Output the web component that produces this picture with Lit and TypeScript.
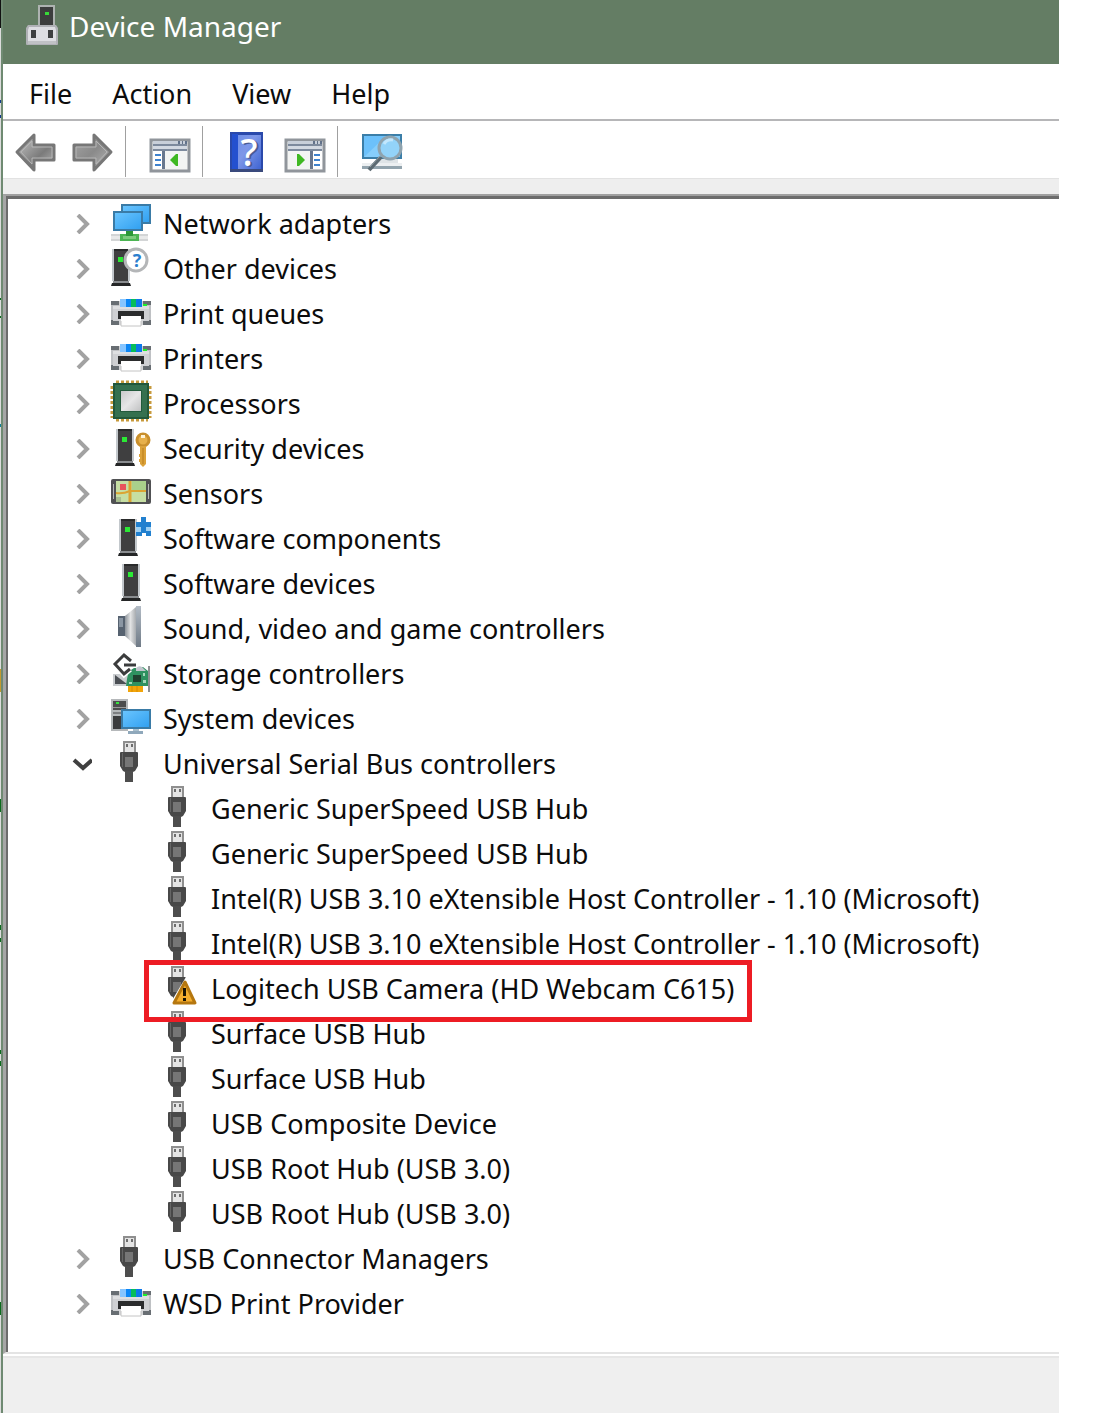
import { LitElement, html, css, svg, nothing, type TemplateResult } from "lit";
import { customElement, property, state } from "lit/decorators.js";
import { classMap } from "lit/directives/class-map.js";

type Art = TemplateResult;

const tower = (x: number) => svg`
  <rect x=${x} y="3" width="18" height="32" fill="#c3c8cc"/>
  <rect x=${x + 2} y="4" width="14" height="31" fill="#3f3f40"/>
  <rect x=${x + 2} y="3" width="14" height="2" fill="#2a2b2c"/>
  <rect x=${x + 1} y="35" width="16" height="2" fill="#8a8d90"/>
  <path d="M${x} 37h18l1 3h-20z" fill="#252627"/>
  <rect x=${x + 6} y="11" width="5" height="5" fill="#2bea35"/>`;

const usbPlug = svg`
  <rect x="12" y="0" width="13" height="12" fill="#8f8f8f"/>
  <rect x="14" y="2" width="9" height="10" fill="#e4e4e4"/>
  <rect x="15" y="3" width="2" height="3" fill="#6d6d6d"/>
  <rect x="20" y="3" width="2" height="3" fill="#6d6d6d"/>
  <path d="M9 12q0-1 1-1h16q1 0 1 1v13l-3 5-2 1h-8l-2-1-3-5z" fill="#484848"/>
  <path d="M14 16h8v10h-8z" fill="#767676"/>
  <path d="M11 12h1v14h-1z" fill="#666"/>
  <rect x="14" y="30" width="8" height="11" fill="#4d4d4d"/>`;

const printer = svg`
  <rect x="0" y="10" width="40" height="24" fill="#686e73"/>
  <path d="M0 14h40v15H0z" fill="#bfc1c4"/>
  <path d="M2 15h36v15H2z" fill="#cfd0d3"/>
  <path d="M8 10h24v8H8z" fill="#cfd0d2"/>
  <path d="M2 15h36v3H2z" fill="#dedfe1"/>
  <rect x="9" y="8" width="6" height="8" fill="#86c5ff"/>
  <rect x="15" y="8" width="5" height="8" fill="#0c86f5"/>
  <rect x="20" y="8" width="5" height="8" fill="#06bd5a"/>
  <rect x="25" y="8" width="6" height="8" fill="#0c78ea"/>
  <rect x="32" y="13" width="4" height="2" fill="#1df02a"/>
  <rect x="8" y="29" width="24" height="5" fill="#d5d6d8"/>
  <path d="M7 20h26v8h-3v-2H10v2H7z" fill="#2b2c2d"/>
  <rect x="10" y="25" width="20" height="10" fill="#fff"/>
  <path d="M10 30v5h20v-5" fill="none" stroke="#c4c4c4" stroke-width="1"/>`;

const panelWindow = (flipped: boolean) => svg`
  <rect x="1" y="8" width="38" height="31" fill="#f3f4f3" stroke="#90959b" stroke-width="3"/>
  <rect x="3" y="9" width="34" height="3" fill="#c8cfd9"/>
  <path d="M28 9h2v3h-2zM32 9h1v3h-1zM35 9h2v3h-2z" fill="#62728a"/>
  <rect x="3" y="12" width="34" height="2" fill="#7d8a9d"/>
  <rect x="3" y="14" width="34" height="3" fill="#d3d9e2"/>
  <rect x="3" y="17" width="34" height="2" fill="#7d8a9d"/>
  <g transform=${flipped ? "translate(40 0) scale(-1 1)" : "translate(0 0)"}>
    <rect x="3" y="19" width="9" height="18" fill="#fff"/>
    <rect x="12" y="19" width="3" height="18" fill="#68778e"/>
    <path d="M5 22h6v2H5zM5 27h6v2H5zM5 32h6v2H5z" fill="#3f83cf"/>
    <path d="M20 28l6-6h2v12h-2z" fill="#3fb822"/>
  </g>`;

const art: Record<string, Art> = {
  title: svg`
    <rect x="13" y="0" width="17" height="20" fill="#aeb3b1"/>
    <rect x="15" y="2" width="13" height="18" fill="#3c3d3d"/>
    <rect x="20" y="7" width="4" height="3" fill="#38d838"/>
    <path d="M3 20h28l2 3v16q0 1-1 1H2q-1 0-1-1V23z" fill="#b0b1b6"/>
    <path d="M4 22h26l1 3v11H3V25z" fill="#dddde2"/>
    <rect x="3" y="36" width="28" height="3" fill="#c0c1c5"/>
    <rect x="6" y="25" width="5" height="8" fill="#3d3e40"/>
    <rect x="23" y="25" width="5" height="8" fill="#3d3e40"/>`,
  back: svg`
    <defs><linearGradient id="g" x1="0" y1="0" x2="1" y2="1">
      <stop offset="0.2" stop-color="#b0b0b0"/><stop offset="0.6" stop-color="#7b7b7b"/><stop offset="1" stop-color="#b8b8b8"/>
    </linearGradient></defs>
    <path d="M2 20L19 3v10h20v15H19v10z" fill="url(#g)" stroke="#777" stroke-width="3" stroke-linejoin="round"/>
    <path d="M6 20L17 9v6h20v11H17v6z" fill="none" stroke="#b5b5b5" stroke-width="1"/>`,
  forward: svg`
    <defs><linearGradient id="g" x1="0" y1="0" x2="1" y2="1">
      <stop offset="0" stop-color="#a6a6a6"/><stop offset="0.5" stop-color="#8a8a8a"/><stop offset="1" stop-color="#b8b8b8"/>
    </linearGradient></defs>
    <path d="M38 20L21 3v10H1v15h20v10z" fill="url(#g)" stroke="#777" stroke-width="3" stroke-linejoin="round"/>
    <path d="M34 20L23 9v6H3v11h20v6z" fill="none" stroke="#b5b5b5" stroke-width="1"/>`,
  tree: panelWindow(false),
  action: panelWindow(true),
  help: svg`
    <defs><linearGradient id="g" x1="0" y1="0" x2="1" y2="1">
      <stop offset="0" stop-color="#6f8fe8"/><stop offset="0.4" stop-color="#7e97e8"/><stop offset="1" stop-color="#3f64d2"/>
    </linearGradient></defs>
    <rect x="3" y="0" width="33" height="40" fill="#2a49ab"/>
    <rect x="5" y="2" width="6" height="35" fill="#2450cf"/>
    <rect x="11" y="3" width="23" height="34" fill="url(#g)"/>
    <rect x="3" y="37" width="33" height="3" fill="#3a4a7c"/>
    <text x="24" y="35" text-anchor="middle" font-size="38" font-weight="500" font-family="Noto Sans, sans-serif" fill="#4a5b94">?</text>
    <text x="22" y="34" text-anchor="middle" font-size="38" font-weight="500" font-family="Noto Sans, sans-serif" fill="#fff">?</text>`,
  scan: svg`
    <rect x="0" y="2" width="40" height="25" fill="#3b7ea8"/>
    <rect x="2" y="4" width="36" height="21" fill="#6cc1fb"/>
    <path d="M2 25L24 4h14v3L20 25z" fill="#86cefc"/>
    <rect x="0" y="31" width="40" height="3" fill="#eceff1"/>
    <rect x="0" y="34" width="40" height="3" fill="#93a4ae"/>
    <rect x="14" y="27" width="22" height="4" fill="#dfe4e7"/>
    <circle cx="28" cy="16" r="11" fill="#93d3f9" stroke="#8fa3ae" stroke-width="3"/>
    <path d="M22 12q3-5 9-4" fill="none" stroke="#c2e7fd" stroke-width="3"/>
    <path d="M19 25L7 38" stroke="#5c6a72" stroke-width="4"/>
    <path d="M18 24L8 35" stroke="#93a1a8" stroke-width="1"/>`,
  network: svg`
    <defs><linearGradient id="g" x1="0" y1="0" x2="1" y2="1">
      <stop offset="0" stop-color="#6cc6ff"/><stop offset="1" stop-color="#2f9ff0"/>
    </linearGradient></defs>
    <rect x="11" y="4" width="28" height="18" fill="url(#g)" stroke="#3a7ba6" stroke-width="2"/>
    <rect x="0" y="33" width="37" height="7" fill="#d3d5d6"/>
    <rect x="0" y="35" width="37" height="3" fill="#e9eaea"/>
    <rect x="9" y="33" width="19" height="7" fill="#4cb553"/>
    <rect x="12" y="35" width="13" height="3" fill="#7dcb7d"/>
    <rect x="15" y="29" width="7" height="6" fill="#2c9838"/>
    <rect x="3" y="11" width="28" height="18" fill="url(#g)" stroke="#3a7ba6" stroke-width="2"/>`,
  other: svg`${tower(1)}
    <circle cx="25" cy="14" r="11" fill="#fff" stroke="#b4b6b8" stroke-width="3"/>
    <text x="26" y="21" text-anchor="middle" font-size="18" font-weight="700" font-family="Open Sans, sans-serif" fill="#2c7fce">?</text>`,
  printer,
  processor: svg`
    <defs><linearGradient id="g" x1="0" y1="0" x2="1" y2="1">
      <stop offset="0" stop-color="#c8c9ca"/><stop offset="0.5" stop-color="#e6e6e7"/><stop offset="1" stop-color="#c0c1c2"/>
    </linearGradient></defs>
    <path d="M5 1h32M5 39h32" stroke="#c79a3c" stroke-width="3" stroke-dasharray="3 2"/>
    <path d="M1 5v32M39 5v32" stroke="#c79a3c" stroke-width="3" stroke-dasharray="3 2"/>
    <rect x="3" y="3" width="34" height="34" fill="#35704f" stroke="#22573b" stroke-width="2"/>
    <rect x="9" y="9" width="22" height="22" fill="#225a3c"/>
    <rect x="10" y="10" width="20" height="20" fill="url(#g)"/>`,
  security: svg`${tower(5)}
    <circle cx="32" cy="14" r="6" fill="#e7b04a" stroke="#c98f2c" stroke-width="3"/>
    <rect x="30" y="9" width="4" height="3" fill="#fff3d6"/>
    <path d="M29 20h6v18l-3 3-3-3z" fill="#dba23b"/>
    <path d="M32 22v16" stroke="#b97d1b" stroke-width="1"/>
    <path d="M28 28h2v3h-2zM28 33h2v3h-2z" fill="#dba23b"/>`,
  sensors: svg`
    <rect x="0" y="8" width="40" height="25" rx="2" fill="#505153"/>
    <rect x="2" y="13" width="1" height="15" fill="#b9babb"/>
    <rect x="37" y="13" width="1" height="15" fill="#b9babb"/>
    <rect x="5" y="10" width="30" height="21" fill="#c6dfa4"/>
    <rect x="21" y="10" width="14" height="9" fill="#a9d08b"/>
    <rect x="5" y="26" width="5" height="5" fill="#a7bc8e"/>
    <path d="M19 10v21" stroke="#dba432" stroke-width="3"/>
    <path d="M5 22q7 1 14-2h16" fill="none" stroke="#dba432" stroke-width="2"/>
    <rect x="9" y="13" width="6" height="6" fill="#e8545c"/>`,
  component: svg`${tower(8)}
    <path d="M25 6h5V1h5v5h5v14h-5v-3h-4v3h-6v-4h1v-5h-1z" fill="#2280cf"/>
    <path d="M25 11h5v5h-5zM35 11h5v4h-5z" fill="#9fd0f2"/>`,
  software: svg`${tower(11)}`,
  sound: svg`
    <defs>
      <linearGradient id="g" x1="0" y1="0" x2="1" y2="0"><stop offset="0" stop-color="#8b9299"/><stop offset="0.5" stop-color="#e2e3e4"/><stop offset="1" stop-color="#a7abaf"/></linearGradient>
      <linearGradient id="h" x1="0" y1="0" x2="0" y2="1"><stop offset="0" stop-color="#b3bcc6"/><stop offset="1" stop-color="#6f7a86"/></linearGradient>
    </defs>
    <rect x="7" y="10" width="8" height="20" fill="#566270"/>
    <rect x="8" y="12" width="4" height="9" fill="#8a96a3"/>
    <path d="M14 10L25 1v39L14 30z" fill="url(#g)"/>
    <rect x="25" y="0" width="5" height="41" fill="url(#h)"/>`,
  storage: svg`
    <rect x="2" y="23" width="14" height="12" fill="#c9cccf"/>
    <path d="M4 24l12 9H4z" fill="#4b4f54"/>
    <path d="M23 17h4l5-1 5 4v15H15l2-14z" fill="#2f9160"/>
    <path d="M25 17q3-3 6-1l4 4H25z" fill="#c2c5cd"/>
    <rect x="22" y="24" width="8" height="7" fill="#20402f"/>
    <path d="M18 31h3v2h-3zM32 22h2v3h-2zM32 29h3v3h-3z" fill="#a5d8ba"/>
    <rect x="37" y="15" width="2" height="26" fill="#8e9092"/>
    <path d="M17 35h15v6H17z" fill="#f2a50a"/>
    <path d="M21 35v6M26 35v6" stroke="#d98a00" stroke-width="1"/>
    <path d="M20 10l-7-6-9 9 9 10 6-5M13 14h12" fill="none" stroke="#fff" stroke-width="6"/>
    <path d="M20 10l-7-6-9 9 9 10 6-5M13 14h12" fill="none" stroke="#3b3c3d" stroke-width="3"/>`,
  system: svg`
    <defs><linearGradient id="g" x1="0" y1="0" x2="1" y2="1">
      <stop offset="0" stop-color="#6cc6ff"/><stop offset="1" stop-color="#2f9ff0"/>
    </linearGradient></defs>
    <rect x="0" y="3" width="17" height="32" fill="#b5b8ba"/>
    <rect x="2" y="5" width="13" height="9" fill="#4b4c4d"/>
    <rect x="5" y="6" width="3" height="2" fill="#35e43b"/>
    <rect x="2" y="11" width="13" height="1" fill="#999"/>
    <rect x="2" y="16" width="13" height="2" fill="#7d7f81"/>
    <rect x="2" y="20" width="8" height="13" fill="#3b3c3d"/>
    <rect x="11" y="14" width="28" height="18" fill="url(#g)" stroke="#3a7ba6" stroke-width="2"/>
    <rect x="22" y="33" width="6" height="3" fill="#a9bfcd"/>
    <rect x="17" y="35" width="15" height="3" fill="#8fa8bb"/>`,
  usb: usbPlug,
  warning: svg`${usbPlug}
    <path d="M27 11L9 41h31V22z" fill="#fff"/>
    <path d="M26 16l10 21H15z" fill="#f6ae2d" stroke="#b5770f" stroke-width="3" stroke-linejoin="round"/>
    <path d="M24 22h3v8h-3zM24 32h3v3h-3z" fill="#1d1503"/>`,
};

@customElement("dm-icon")
export class DmIcon extends LitElement {
  static styles = css`
    :host { display: block; flex: none; width: 40px; height: 40px; }
    .art { display: block; width: 40px; height: 40px; overflow: visible; }
  `;
  @property() name = "usb";
  render() {
    return html`<svg class="art" viewBox="0 0 40 40" aria-hidden="true">${art[this.name]}</svg>`;
  }
}

interface DeviceNode {
  label: string;
  icon: string;
  marked?: boolean;
  children?: DeviceNode[];
}

const devices: DeviceNode[] = [
  { label: "Network adapters", icon: "network" },
  { label: "Other devices", icon: "other" },
  { label: "Print queues", icon: "printer" },
  { label: "Printers", icon: "printer" },
  { label: "Processors", icon: "processor" },
  { label: "Security devices", icon: "security" },
  { label: "Sensors", icon: "sensors" },
  { label: "Software components", icon: "component" },
  { label: "Software devices", icon: "software" },
  { label: "Sound, video and game controllers", icon: "sound" },
  { label: "Storage controllers", icon: "storage" },
  { label: "System devices", icon: "system" },
  {
    label: "Universal Serial Bus controllers",
    icon: "usb",
    children: [
      { label: "Generic SuperSpeed USB Hub", icon: "usb" },
      { label: "Generic SuperSpeed USB Hub", icon: "usb" },
      { label: "Intel(R) USB 3.10 eXtensible Host Controller - 1.10 (Microsoft)", icon: "usb" },
      { label: "Intel(R) USB 3.10 eXtensible Host Controller - 1.10 (Microsoft)", icon: "usb" },
      { label: "Logitech USB Camera (HD Webcam C615)", icon: "warning", marked: true },
      { label: "Surface USB Hub", icon: "usb" },
      { label: "Surface USB Hub", icon: "usb" },
      { label: "USB Composite Device", icon: "usb" },
      { label: "USB Root Hub (USB 3.0)", icon: "usb" },
      { label: "USB Root Hub (USB 3.0)", icon: "usb" },
    ],
  },
  { label: "USB Connector Managers", icon: "usb" },
  { label: "WSD Print Provider", icon: "printer" },
];

const toolGroups = [
  [{ icon: "back", label: "Back" }, { icon: "forward", label: "Forward" }],
  [{ icon: "tree", label: "Show/Hide Console Tree" }],
  [{ icon: "help", label: "Help" }, { icon: "action", label: "Show/Hide Action Pane" }],
  [{ icon: "scan", label: "Scan for hardware changes" }],
];

@customElement("app-root")
export class AppRoot extends LitElement {
  static styles = css`
    :host {
      display: block;
      box-sizing: border-box;
      min-height: 100vh;
      padding: 0 53px 0 1px;
      /* sliver of the desktop visible left of the window edge */
      background:
        linear-gradient(
          #111 0 28px, #dcdcdc 28px 100px, #123a8c 100px 103px, #dcdcdc 103px 115px, #123a8c 115px 118px,
          #dcdcdc 118px 298px, #0b6b1c 298px 300px, #dcdcdc 300px 316px, #0b6b1c 316px 318px,
          #dcdcdc 318px 424px, #12809a 424px 427px, #dcdcdc 427px 669px, #c49a2e 669px 692px,
          #dcdcdc 692px 799px, #0b6b1c 799px 812px, #dcdcdc 812px 925px, #0b6b1c 925px 930px,
          #dcdcdc 930px 938px, #0b6b1c 938px 942px, #dcdcdc 942px 1050px, #0b6b1c 1050px 1054px,
          #dcdcdc 1054px 1061px, #0b6b1c 1061px 1066px, #dcdcdc 1066px 1302px, #0b6b1c 1302px 1315px,
          #dcdcdc 1315px
        ) left top / 1px 100% no-repeat,
        #fff;
      color: #0c0c0c;
      font: 27px/45px "Noto Sans", "Open Sans", sans-serif;
    }
    button { margin: 0; padding: 0; border: 0; background: none; color: inherit; font: inherit; }
    ul { margin: 0; padding: 0; list-style: none; }
    .window {
      display: flex;
      flex-direction: column;
      box-sizing: border-box;
      min-height: 100vh;
      border-left: 2px solid #6f8a72;
    }
    .titlebar {
      display: flex;
      align-items: center;
      gap: 8px;
      box-sizing: border-box;
      height: 64px;
      padding: 0 22px 14px;
      background: #647d64;
      color: #fff;
    }
    .caption { margin: 0; padding-top: 2px; font-size: 28px; font-weight: 400; }
    .title-icon { width: 36px; }
    .menubar {
      display: flex;
      gap: 40px;
      padding: 7px 26px 3px;
      border-bottom: 2px solid #b6b6b8;
    }
    .toolbar { display: flex; padding: 5px 0 1px; border-bottom: 1px solid #e2e2e2; }
    .tools { display: flex; gap: 18px; height: 45px; padding: 6px 12px 0 24px; border-right: 1px solid #a0a0a0; }
    .tools:first-child { padding-left: 12px; }
    .tools:last-child { border-right: 0; }
    .tool { display: block; height: 40px; }
    .gutter { height: 15px; background: #eee; }
    .pane {
      flex: none;
      padding: 5px 0 26px 56px;
      border-top: 2px solid #a0a0a0;
      border-left: 3px solid #a6a6a6;
      border-bottom: 2px solid #e4e4e4;
      box-shadow: inset 2px 3px #6c6c6c;
    }
    .row { position: relative; display: flex; height: 45px; white-space: nowrap; }
    .nested .row { padding-left: 97px; }
    .toggle { display: grid; place-items: center; width: 40px; height: 45px; margin-right: 9px; }
    .chevron { display: block; width: 20px; height: 20px; fill: none; stroke: #a2a2a2; stroke-width: 4; }
    .open .chevron { stroke: #404040; }
    .label { padding-left: 12px; }
    .mark {
      position: absolute;
      inset: -6px auto -11px 82px;
      z-index: 1;
      width: 598px;
      border: 5px solid #ed1c24;
      pointer-events: none;
    }
    .status { flex: 1; margin-top: 2px; border-top: 2px solid #e6e6e6; background: #efefef; }
  `;

  @state() private expanded = new Set<string>(["Universal Serial Bus controllers"]);

  private toggle(label: string) {
    const next = new Set(this.expanded);
    if (!next.delete(label)) next.add(label);
    this.expanded = next;
  }

  private renderChild(node: DeviceNode) {
    return html`<li role="treeitem">
      <div class="row">
        <dm-icon name=${node.icon}></dm-icon>
        <span class="label">${node.label}</span>
        ${node.marked ? html`<div class="mark"></div>` : nothing}
      </div>
    </li>`;
  }

  private renderNode(node: DeviceNode) {
    const open = this.expanded.has(node.label);
    return html`<li role="treeitem" aria-expanded=${open ? "true" : "false"}>
      <div class="row">
        <button
          class=${classMap({ toggle: true, open })}
          aria-label=${`${open ? "Collapse" : "Expand"} ${node.label}`}
          @click=${() => this.toggle(node.label)}
        >
          <svg class="chevron" viewBox="0 0 20 20" aria-hidden="true">
            <path d=${open ? "M2 6l9 8 9-8" : "M6 1l9 9-9 9"} />
          </svg>
        </button>
        <dm-icon name=${node.icon}></dm-icon>
        <span class="label">${node.label}</span>
      </div>
      ${open && node.children
        ? html`<ul class="nested" role="group">${node.children.map((c) => this.renderChild(c))}</ul>`
        : nothing}
    </li>`;
  }

  render() {
    return html`<main class="window">
      <header class="titlebar">
        <dm-icon class="title-icon" name="title"></dm-icon>
        <h1 class="caption">Device Manager</h1>
      </header>
      <nav class="menubar">
        ${["File", "Action", "View", "Help"].map((m) => html`<button class="menu">${m}</button>`)}
      </nav>
      <div class="toolbar" role="toolbar">
        ${toolGroups.map(
          (group) => html`<div class="tools">
            ${group.map(
              (t) => html`<button class="tool" aria-label=${t.label}><dm-icon name=${t.icon}></dm-icon></button>`
            )}
          </div>`
        )}
      </div>
      <div class="gutter"></div>
      <section class="pane">
        <ul role="tree" aria-label="Devices">${devices.map((d) => this.renderNode(d))}</ul>
      </section>
      <footer class="status"></footer>
    </main>`;
  }
}
